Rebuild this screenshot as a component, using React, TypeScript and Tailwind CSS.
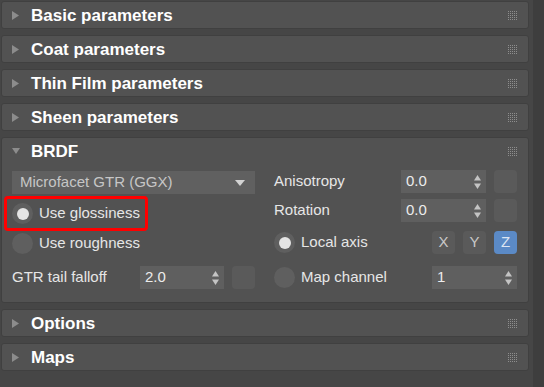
import React from "react";

const font = { fontFamily: '"Liberation Sans", Arial, sans-serif' };

const Grip = () => (
  <svg width="9" height="9" viewBox="0 0 9 9" className="shrink-0">
    {[0, 2, 4, 6, 8].map((y) =>
      [0, 2, 4, 6, 8].map((x) => (
        <rect key={`${x}-${y}`} x={x} y={y} width="1" height="1" fill="#8e8e8e" />
      ))
    )}
  </svg>
);

const Header = ({ title, open = false }: { title: string; open?: boolean }) => (
  <div className="flex h-[26px] items-center pl-[10px] pr-[11px]">
    {open ? (
      <svg width="8" height="6" viewBox="0 0 8 6" className="mr-[11px]">
        <path d="M0 0H8L4 6Z" fill="#8c8c8c" />
      </svg>
    ) : (
      <svg width="7" height="9" viewBox="0 0 7 9" className="mr-[12px]">
        <path d="M0 0L7 4.5L0 9Z" fill="#8c8c8c" />
      </svg>
    )}
    <span className="flex-1 text-[17px] font-bold leading-none text-white">{title}</span>
    <Grip />
  </div>
);

const Rollout = ({ title }: { title: string }) => (
  <div className="rounded-[3px] border border-[#404040] bg-[#525252]">
    <Header title={title} />
  </div>
);

const Spinner = ({ value, w = "w-[85px]" }: { value: string; w?: string }) => (
  <div className={`flex h-[23px] ${w} items-center justify-between bg-[#5f5f5f] pl-[5px] pr-[5px]`}>
    <span className="text-[15px] text-[#ececec]">{value}</span>
    <svg width="7" height="14" viewBox="0 0 7 14">
      <path d="M3.5 0L7 5.5H0Z" fill="#c4c4c4" />
      <path d="M0 8.5H7L3.5 14Z" fill="#c4c4c4" />
    </svg>
  </div>
);

const Square = () => <div className="h-[23px] w-[23px] rounded-[4px] bg-[#5a5a5a]" />;

const Radio = ({ on = false }: { on?: boolean }) => (
  <div className="flex h-[21px] w-[21px] shrink-0 items-center justify-center rounded-full bg-[#5f5f5f]">
    {on && <div className="h-[12px] w-[12px] rounded-full bg-[#e4e4e4]" />}
  </div>
);

const Axis = ({ label, active = false }: { label: string; active?: boolean }) => (
  <div
    className={`flex h-[23px] w-[23px] items-center justify-center rounded-[4px] text-[15px] ${
      active ? "bg-[#5b8ac6] text-[#dde6f3]" : "bg-[#5a5a5a] text-[#c8c8c8]"
    }`}
  >
    {label}
  </div>
);

export default function App() {
  return (
    <div className="flex h-[387px] w-[544px] bg-[#464646]" style={font}>
      <div className="flex w-[533px] flex-col gap-[6px] pl-px pr-[4px] pt-px">
        <Rollout title="Basic parameters" />
        <Rollout title="Coat parameters" />
        <Rollout title="Thin Film parameters" />
        <Rollout title="Sheen parameters" />

        <div className="rounded-[3px] border border-[#404040] bg-[#525252] pb-[13px]">
          <Header title="BRDF" open />
          <div className="flex pl-[10px]">
            {/* left column */}
            <div className="flex w-[243px] flex-col">
              <div className="mt-[7px] flex h-[23px] items-center justify-between bg-[#606060] pl-[8px] pr-[10px]">
                <span className="text-[15px] text-[#c6c6c6]">Microfacet GTR (GGX)</span>
                <svg width="10" height="6" viewBox="0 0 10 6">
                  <path d="M0 0H10L5 6Z" fill="#d2d2d2" />
                </svg>
              </div>
              <div className="-ml-[8px] mt-[2px] flex h-[35px] w-[144px] items-center rounded-[4px] border-[3px] border-[#ff0000] pl-[5px]">
                <Radio on />
                <span className="ml-[6px] text-[15px] text-[#e6e6e6]">Use glossiness</span>
              </div>
              <div className="flex h-[24px] items-center">
                <Radio />
                <span className="ml-[6px] text-[15px] text-[#e6e6e6]">Use roughness</span>
              </div>
              <div className="mt-[11px] flex h-[23px] items-center">
                <span className="w-[128px] text-[15px] text-[#e6e6e6]">GTR tail falloff</span>
                <Spinner value="2.0" w="w-[84px]" />
                <div className="ml-[8px]">
                  <Square />
                </div>
              </div>
            </div>

            {/* right column */}
            <div className="ml-[19px] flex w-[243px] flex-col">
              <div className="mt-[6px] flex h-[23px] items-center gap-[8px]">
                <span className="flex-1 text-[15px] text-[#e6e6e6]">Anisotropy</span>
                <Spinner value="0.0" />
                <Square />
              </div>
              <div className="mt-[6px] flex h-[23px] items-center gap-[8px]">
                <span className="flex-1 text-[15px] text-[#e6e6e6]">Rotation</span>
                <Spinner value="0.0" />
                <Square />
              </div>
              <div className="mt-[9px] flex h-[23px] items-center gap-[8px]">
                <div className="flex flex-1 items-center">
                  <Radio on />
                  <span className="ml-[6px] text-[15px] text-[#e6e6e6]">Local axis</span>
                </div>
                <Axis label="X" />
                <Axis label="Y" />
                <Axis label="Z" active />
              </div>
              <div className="mt-[12px] flex h-[23px] items-center">
                <div className="flex flex-1 items-center">
                  <Radio />
                  <span className="ml-[6px] text-[15px] text-[#e6e6e6]">Map channel</span>
                </div>
                <Spinner value="1" />
              </div>
            </div>
          </div>
        </div>

        <Rollout title="Options" />
        <Rollout title="Maps" />
      </div>
      <div className="w-[11px] bg-[#3e3e3e]" />
    </div>
  );
}
